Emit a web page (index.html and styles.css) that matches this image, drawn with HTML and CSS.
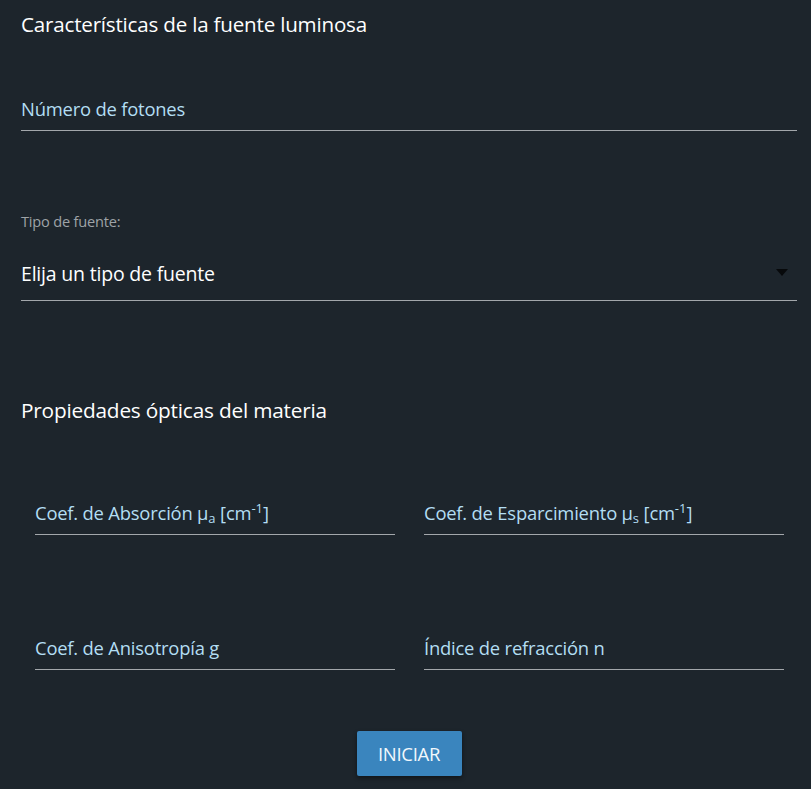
FILE: index.html
```html
<!DOCTYPE html>
<html lang="es">
<head>
<meta charset="utf-8">
<title>Simulación</title>
<link rel="stylesheet" href="styles.css">
</head>
<body>
<div class="page">
  <h2 class="section-title first">Características de la fuente luminosa</h2>
  <div class="field photons"><span class="field-label">Número de fotones</span></div>

  <div class="select-block">
    <span class="select-caption">Tipo de fuente:</span>
    <div class="select">
      <span class="select-value">Elija un tipo de fuente</span>
      <span class="caret"></span>
    </div>
  </div>

  <h2 class="section-title second">Propiedades ópticas del materia</h2>
  <div class="grid">
    <div class="field"><span class="field-label">Coef. de Absorción μ<sub>a</sub> [cm<sup>-1</sup>]</span></div>
    <div class="field"><span class="field-label">Coef. de Esparcimiento μ<sub>s</sub> [cm<sup>-1</sup>]</span></div>
    <div class="field"><span class="field-label">Coef. de Anisotropía g</span></div>
    <div class="field"><span class="field-label">Índice de refracción n</span></div>
  </div>

  <div class="actions"><button class="btn">INICIAR</button></div>
</div>
</body>
</html>
```
FILE: styles.css
```css
html, body {
  margin: 0;
  padding: 0;
  background: #1d252c;
}
body {
  font-family: "Open Sans", "Noto Sans", sans-serif;
  color: #ffffff;
  min-height: 789px;
}
.page {
  padding: 0 14px 0 21px;
}
.section-title {
  font-weight: 400;
  font-size: 20.6px;
  line-height: 30px;
  margin: 0;
  color: #ffffff;
  letter-spacing: -0.2px;
}
.section-title.first { margin-top: 9px; }
.section-title.second { margin-top: 94px; font-size: 20.8px; }

.field {
  border-bottom: 1px solid #a3a7ab;
  padding-bottom: 9px;
}
.field-label {
  display: block;
  font-size: 18.4px;
  line-height: 24px;
  color: #b3def3;
  letter-spacing: -0.2px;
  white-space: nowrap;
}
.field-label sub, .field-label sup {
  font-size: 13px;
  line-height: 0;
  letter-spacing: 0;
}
.field-label sub { vertical-align: -3px; }
.field-label sup { vertical-align: 7px; }

.photons { margin-top: 58px; }

.select-block { margin-top: 81px; }
.select-caption {
  display: block;
  font-size: 14.6px;
  line-height: 18px;
  color: #9ea3a7;
  letter-spacing: -0.2px;
}
.select {
  margin-top: 31px;
  display: flex;
  align-items: center;
  justify-content: space-between;
  border-bottom: 1px solid #a3a7ab;
  padding-bottom: 13px;
}
.select-value {
  font-size: 19.5px;
  line-height: 26px;
  color: #ffffff;
  letter-spacing: -0.2px;
}
.caret {
  width: 0;
  height: 0;
  border-left: 6px solid transparent;
  border-right: 6px solid transparent;
  border-top: 7px solid #07090b;
  margin-right: 9px;
  margin-top: -4px;
}

.grid {
  display: grid;
  grid-template-columns: 1fr 1fr;
  column-gap: 29px;
  row-gap: 101px;
  padding: 0 13px 0 14px;
  margin-top: 76px;
}

.actions {
  display: flex;
  justify-content: center;
  margin-top: 61px;
}
.btn {
  width: 105px;
  height: 45px;
  background: #3a85be;
  color: #f2f8fc;
  border: none;
  border-radius: 2px;
  font-family: inherit;
  font-size: 18.5px;
  letter-spacing: -0.3px;
  box-shadow: 0 2px 4px rgba(0,0,0,0.45);
  padding: 0;
}
```
